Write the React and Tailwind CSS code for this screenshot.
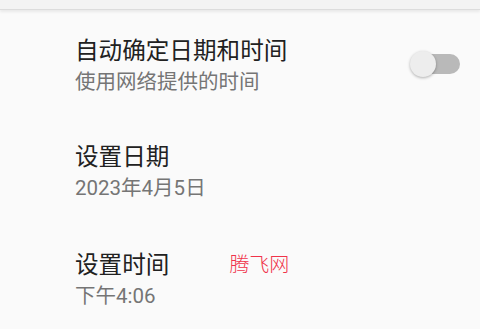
import React from "react";

const font = { fontFamily: 'Roboto, "Noto Sans CJK SC", "Noto Sans", sans-serif' };

export default function App() {
  return (
    <div className="w-[480px] h-[329px] overflow-hidden bg-[#fafafa] relative" style={font}>
      <div className="h-[10px] bg-[#f3f3f3] border-b border-[#dcdcdc] shadow-[0_2px_3px_rgba(0,0,0,0.07)] relative z-10" />
      <div className="flex flex-col">
        <div className="h-[112px] flex items-center pl-[75px] pr-[20px]">
          <div className="flex-1 flex flex-col">
            <div className="text-[23.6px] leading-[30px] text-[#212121]">自动确定日期和时间</div>
            <div className="mt-[2px] text-[20.5px] leading-[29px] text-[#757575]">使用网络提供的时间</div>
          </div>
          <div className="relative w-[50px] h-[28px] flex items-center -mt-[5px]">
            <div className="absolute left-[4px] right-0 h-[20px] rounded-full bg-[#b9b9b9]" />
            <div className="absolute left-[0px] w-[26px] h-[26px] rounded-full bg-[#ededed] shadow-[0_1px_3px_rgba(0,0,0,0.3)]" />
          </div>
        </div>
        <div className="h-[101px] flex items-center pl-[75px]">
          <div className="flex flex-col">
            <div className="text-[23.6px] leading-[30px] text-[#212121]">设置日期</div>
            <div className="mt-[2px] text-[20.5px] leading-[29px] text-[#757575]">2023年4月5日</div>
          </div>
        </div>
        <div className="h-[114px] flex items-center pl-[75px]">
          <div className="flex flex-col">
            <div className="flex items-center">
              <span className="text-[23.6px] leading-[30px] text-[#212121]">设置时间</span>
              <span className="ml-[60px] text-[20px] leading-[30px] text-[#f0334a] font-light">腾飞网</span>
            </div>
            <div className="mt-[2px] text-[20.5px] leading-[29px] text-[#757575]">下午4:06</div>
          </div>
        </div>
      </div>
    </div>
  );
}
